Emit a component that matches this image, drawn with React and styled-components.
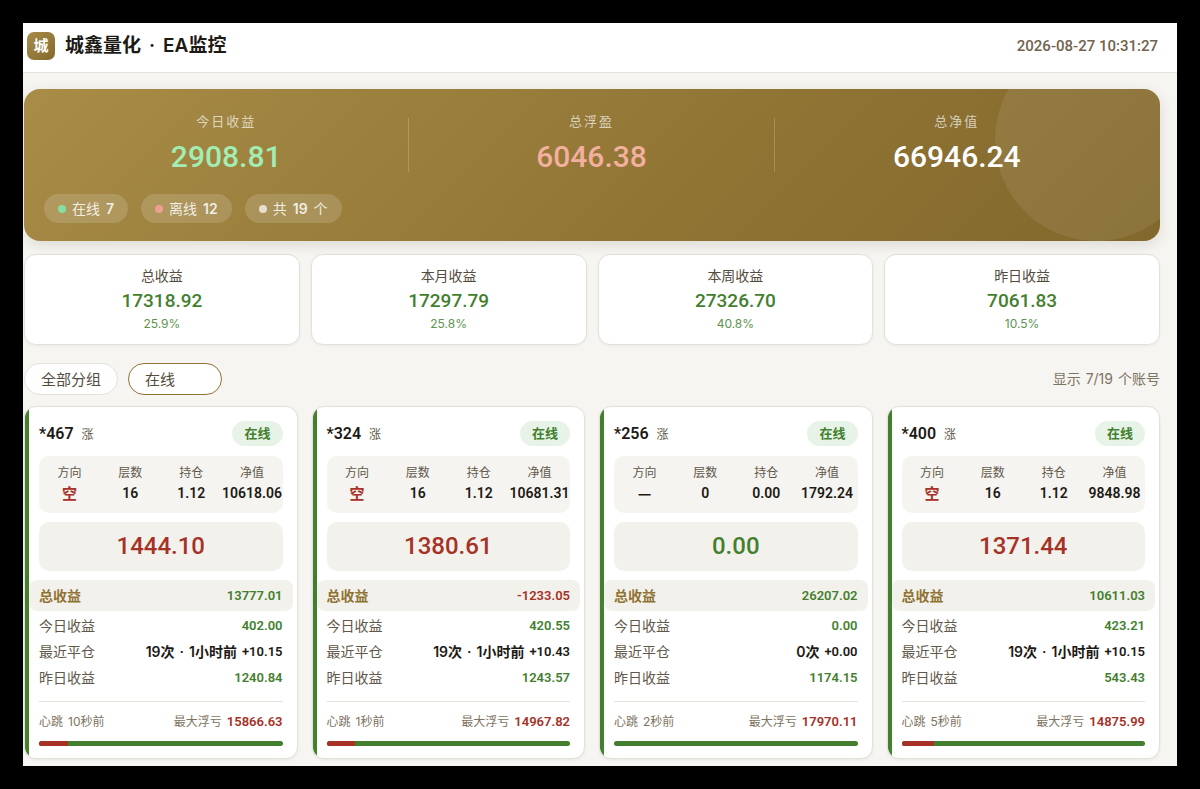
import React, { useState } from 'react';
import styled, { createGlobalStyle } from 'styled-components';

const colors = {
  up: '#437f2f',
  down: '#a53127',
  ink: '#1d1a15',
  label: '#61584a',
  muted: '#7d7361',
  gold: '#8f7334',
  line: '#e4e1d8',
  panel: '#f5f4f1',
  sand: '#f3f1eb',
};

const numFont = "Roboto, 'Noto Sans CJK SC', sans-serif";

const GlobalStyle = createGlobalStyle`
  * {
    box-sizing: border-box;
  }
  body {
    margin: 0;
    background: #000;
    color: ${colors.ink};
    font-family: Inter, 'Noto Sans CJK SC', sans-serif;
    -webkit-font-smoothing: antialiased;
  }
`;

const Frame = styled.div`
  min-height: 100vh;
  padding: 23px;
`;

const Page = styled.div`
  background: #f6f5f2;
  overflow: hidden;
`;

const Header = styled.header`
  display: flex;
  align-items: center;
  gap: 10px;
  height: 50px;
  padding: 0 19px 3px 4px;
  background: #fff;
  border-bottom: 1px solid ${colors.line};
`;

const Logo = styled.span`
  display: flex;
  align-items: center;
  justify-content: center;
  width: 28px;
  height: 28px;
  border-radius: 7px;
  background: linear-gradient(135deg, #a88c48, #84692e);
  color: #fff;
  font-size: 15px;
  font-weight: 600;
  line-height: 20px;
`;

const Title = styled.h1`
  display: flex;
  gap: 8px;
  margin: 0;
  font-size: 19px;
  font-weight: 600;
  line-height: 28px;
`;

const Clock = styled.time`
  margin-left: auto;
  color: #71634e;
  font-family: ${numFont};
  font-size: 15px;
  font-weight: 500;
  line-height: 20px;
`;

const Main = styled.main`
  padding: 16px 17px 7px 1px;
`;

const Hero = styled.section`
  position: relative;
  overflow: hidden;
  padding: 20px 20px 18px;
  border-radius: 16px;
  background: linear-gradient(135deg, #a88c47, #8f7434 60%, #82682c);
  box-shadow: 0 4px 14px rgba(70, 60, 30, 0.14);

  &::after {
    content: '';
    position: absolute;
    top: -51px;
    right: -38px;
    width: 203px;
    height: 203px;
    border-radius: 50%;
    background: rgba(255, 255, 255, 0.08);
  }
`;

const HeroGrid = styled.div`
  display: grid;
  grid-template-columns: repeat(3, 1fr);
`;

const HeroItem = styled.div`
  display: grid;
  grid-template-columns: 1fr 1px;
  align-items: center;
  text-align: center;
`;

const HeroLine = styled.span`
  height: 54px;
  background: ${p => (p.$hidden ? 'transparent' : 'rgba(255, 255, 255, 0.2)')};
`;

const HeroLabel = styled.div`
  color: rgba(255, 255, 255, 0.68);
  font-size: 13px;
  letter-spacing: 2px;
  line-height: 24px;
`;

const HeroValue = styled.div`
  color: ${p => p.$color};
  font-family: ${numFont};
  font-size: 30px;
  font-weight: 500;
  line-height: 48px;
`;

const Chips = styled.div`
  display: flex;
  gap: 13px;
  margin-top: 13px;
`;

const Chip = styled.span`
  display: flex;
  align-items: center;
  gap: 6px;
  height: 29px;
  padding: 0 14px;
  border-radius: 15px;
  background: rgba(255, 255, 255, 0.15);
  color: rgba(255, 255, 255, 0.85);
  font-size: 14px;
  line-height: 20px;

  b {
    font-weight: 600;
  }
`;

const Dot = styled.i`
  width: 8px;
  height: 8px;
  border-radius: 50%;
  background: ${p => p.$color};
`;

const Stats = styled.section`
  display: grid;
  grid-template-columns: repeat(4, 1fr);
  gap: 11px;
  margin-top: 13px;
`;

const Stat = styled.div`
  padding: 11px 12px 12px;
  border: 1px solid ${colors.line};
  border-radius: 12px;
  background: #fff;
  box-shadow: 0 1px 3px rgba(60, 50, 30, 0.06);
  text-align: center;
`;

const StatLabel = styled.div`
  color: #544b3e;
  font-size: 14px;
  line-height: 20px;
`;

const StatValue = styled.div`
  color: ${colors.up};
  font-family: ${numFont};
  font-size: 19px;
  font-weight: 500;
  line-height: 30px;
`;

const StatPct = styled.div`
  color: ${colors.up};
  font-size: 12px;
  line-height: 16px;
  opacity: 0.85;
`;

const Filters = styled.div`
  display: flex;
  align-items: center;
  gap: 10px;
  margin-top: 18px;
`;

const Select = styled.select`
  appearance: none;
  width: 94px;
  height: 32px;
  padding: 0 16px;
  border: 1px solid ${p => (p.$active ? colors.gold : colors.line)};
  border-radius: 16px;
  background: #fff;
  color: #544b3e;
  font-family: inherit;
  font-size: 15px;
  outline: none;
`;

const Count = styled.span`
  display: flex;
  gap: 5px;
  margin-left: auto;
  color: ${colors.muted};
  font-size: 14px;
  line-height: 20px;
`;

const Cards = styled.section`
  display: grid;
  grid-template-columns: repeat(4, 1fr);
  gap: 14px;
  margin-top: 11px;
`;

const Card = styled.article`
  position: relative;
  overflow: hidden;
  padding: 14px 14px 12px;
  border: 1px solid ${colors.line};
  border-radius: 12px;
  background: #fff;
  box-shadow: 0 1px 3px rgba(60, 50, 30, 0.08);

  &::before {
    content: '';
    position: absolute;
    top: 0;
    bottom: 0;
    left: 0;
    width: 4px;
    background: ${colors.up};
  }
`;

const CardHead = styled.div`
  display: flex;
  align-items: baseline;
  gap: 8px;
`;

const Account = styled.h2`
  margin: 0;
  font-family: ${numFont};
  font-size: 16px;
  font-weight: 600;
  line-height: 25px;
`;

const Tag = styled.span`
  color: ${colors.label};
  font-size: 12px;
  line-height: 20px;
`;

const Badge = styled.span`
  align-self: center;
  margin-left: auto;
  padding: 0 12px;
  border-radius: 13px;
  background: #e7f3e7;
  color: ${colors.up};
  font-size: 13px;
  font-weight: 600;
  line-height: 25px;
`;

const Meta = styled.dl`
  display: grid;
  grid-template-columns: repeat(4, 1fr);
  margin: 10px 0 9px;
  padding: 8px 0 9px;
  border-radius: 10px;
  background: ${colors.panel};
  text-align: center;

  div {
    min-width: 0;
  }
  dt {
    color: ${colors.label};
    font-size: 12px;
    line-height: 18px;
  }
  dd {
    margin: 0;
    font-family: ${numFont};
    font-size: 14px;
    font-weight: 600;
    line-height: 22px;
    white-space: nowrap;
  }
`;

const Side = styled.dd`
  color: ${p => (p.$short ? colors.down : colors.ink)};

  && {
    font-family: 'Noto Sans CJK SC', sans-serif;
    font-size: 15px;
  }
`;

const Pnl = styled.div`
  margin-bottom: 9px;
  border-radius: 10px;
  background: ${colors.sand};
  color: ${p => p.$color};
  font-family: ${numFont};
  font-size: 24px;
  font-weight: 500;
  line-height: 49px;
  text-align: center;
`;

const Row = styled.div`
  display: flex;
  align-items: center;
  justify-content: space-between;
  color: ${colors.label};
  font-size: 14px;
  line-height: 26px;
`;

const TotalRow = styled(Row)`
  margin: 0 -10px 2px;
  padding: 0 10px;
  border-radius: 8px;
  background: ${colors.sand};
  color: ${colors.gold};
  font-weight: 600;
  line-height: 31px;
`;

const Value = styled.span`
  color: ${p => p.$color};
  font-family: ${numFont};
  font-size: 13px;
  font-weight: 600;
`;

const Closed = styled.span`
  display: flex;
  gap: 5px;
  color: ${colors.ink};
  font-size: 14px;
  font-weight: 600;
`;

const Foot = styled.div`
  display: flex;
  justify-content: space-between;
  margin-top: 10px;
  padding-top: 10px;
  border-top: 1px solid ${colors.line};
  color: ${colors.muted};
  font-size: 12px;
  line-height: 20px;
`;

const FootItem = styled.span`
  display: flex;
  gap: 5px;
`;

const Bar = styled.div`
  height: 5px;
  margin-top: 9px;
  border-radius: 3px;
  background: ${colors.up};
  overflow: hidden;
`;

const BarFill = styled.div`
  height: 100%;
  background: ${colors.down};
`;

const stats = [
  { label: '总收益', value: '17318.92', pct: '25.9%' },
  { label: '本月收益', value: '17297.79', pct: '25.8%' },
  { label: '本周收益', value: '27326.70', pct: '40.8%' },
  { label: '昨日收益', value: '7061.83', pct: '10.5%' },
];

const accounts = [
  { id: '*467', side: '空', layers: '16', lots: '1.12', equity: '10618.06', pnl: '1444.10', total: '13777.01', today: '402.00', closed: 19, ago: '1小时前', last: '+10.15', yesterday: '1240.84', beat: '10秒前', maxLoss: '15866.63', risk: 12 },
  { id: '*324', side: '空', layers: '16', lots: '1.12', equity: '10681.31', pnl: '1380.61', total: '-1233.05', today: '420.55', closed: 19, ago: '1小时前', last: '+10.43', yesterday: '1243.57', beat: '1秒前', maxLoss: '14967.82', risk: 11.5 },
  { id: '*256', side: '—', layers: '0', lots: '0.00', equity: '1792.24', pnl: '0.00', total: '26207.02', today: '0.00', closed: 0, last: '+0.00', yesterday: '1174.15', beat: '2秒前', maxLoss: '17970.11', risk: 0 },
  { id: '*400', side: '空', layers: '16', lots: '1.12', equity: '9848.98', pnl: '1371.44', total: '10611.03', today: '423.21', closed: 19, ago: '1小时前', last: '+10.15', yesterday: '543.43', beat: '5秒前', maxLoss: '14875.99', risk: 13.5 },
];

function HeroStat({ label, value, color, last }) {
  return (
    <HeroItem>
      <div>
        <HeroLabel>{label}</HeroLabel>
        <HeroValue $color={color}>{value}</HeroValue>
      </div>
      <HeroLine $hidden={last} />
    </HeroItem>
  );
}

function AccountCard({ account }) {
  const a = account;
  return (
    <Card>
      <CardHead>
        <Account>{a.id}</Account>
        <Tag>涨</Tag>
        <Badge>在线</Badge>
      </CardHead>
      <Meta>
        <div><dt>方向</dt><Side $short={a.side === '空'}>{a.side}</Side></div>
        <div><dt>层数</dt><dd>{a.layers}</dd></div>
        <div><dt>持仓</dt><dd>{a.lots}</dd></div>
        <div><dt>净值</dt><dd>{a.equity}</dd></div>
      </Meta>
      {/* open positions are red, flat accounts stay green */}
      <Pnl $color={a.side === '空' ? colors.down : colors.up}>{a.pnl}</Pnl>
      <TotalRow>
        <span>总收益</span>
        <Value $color={a.total.startsWith('-') ? colors.down : colors.up}>{a.total}</Value>
      </TotalRow>
      <Row>
        <span>今日收益</span>
        <Value $color={colors.up}>{a.today}</Value>
      </Row>
      <Row>
        <span>最近平仓</span>
        <Closed>
          <span>{a.closed}次</span>
          {a.ago ? <span>·</span> : null}
          {a.ago ? <span>{a.ago}</span> : null}
          <Value $color={colors.ink}>{a.last}</Value>
        </Closed>
      </Row>
      <Row>
        <span>昨日收益</span>
        <Value $color={colors.up}>{a.yesterday}</Value>
      </Row>
      <Foot>
        <FootItem><span>心跳</span><span>{a.beat}</span></FootItem>
        <FootItem><span>最大浮亏</span><Value $color={colors.down}>{a.maxLoss}</Value></FootItem>
      </Foot>
      <Bar>
        <BarFill style={{ width: `${a.risk}%` }} />
      </Bar>
    </Card>
  );
}

export default function App() {
  const [group, setGroup] = useState('all');
  const [status, setStatus] = useState('online');

  return (
    <Frame>
      <GlobalStyle />
      <Page>
        <Header>
          <Logo>城</Logo>
          <Title><span>城鑫量化</span><span>·</span><span>EA监控</span></Title>
          <Clock>2026-08-27 10:31:27</Clock>
        </Header>
        <Main>
          <Hero>
            <HeroGrid>
              <HeroStat label="今日收益" value="2908.81" color="#a3edb4" />
              <HeroStat label="总浮盈" value="6046.38" color="#f3b09f" />
              <HeroStat label="总净值" value="66946.24" color="#fff" last />
            </HeroGrid>
            <Chips>
              <Chip><Dot $color="#86dfa0" /><span>在线</span><b>7</b></Chip>
              <Chip><Dot $color="#ef9f8d" /><span>离线</span><b>12</b></Chip>
              <Chip><Dot $color="#e6dfcf" /><span>共</span><b>19</b><span>个</span></Chip>
            </Chips>
          </Hero>
          <Stats>
            {stats.map(s => (
              <Stat key={s.label}>
                <StatLabel>{s.label}</StatLabel>
                <StatValue>{s.value}</StatValue>
                <StatPct>{s.pct}</StatPct>
              </Stat>
            ))}
          </Stats>
          <Filters>
            <Select aria-label="分组" value={group} onChange={e => setGroup(e.target.value)}>
              <option value="all">全部分组</option>
            </Select>
            <Select aria-label="状态" $active value={status} onChange={e => setStatus(e.target.value)}>
              <option value="online">在线</option>
              <option value="offline">离线</option>
            </Select>
            <Count><span>显示</span><span>7/19</span><span>个账号</span></Count>
          </Filters>
          <Cards>
            {accounts.map(a => <AccountCard key={a.id} account={a} />)}
          </Cards>
        </Main>
      </Page>
    </Frame>
  );
}
